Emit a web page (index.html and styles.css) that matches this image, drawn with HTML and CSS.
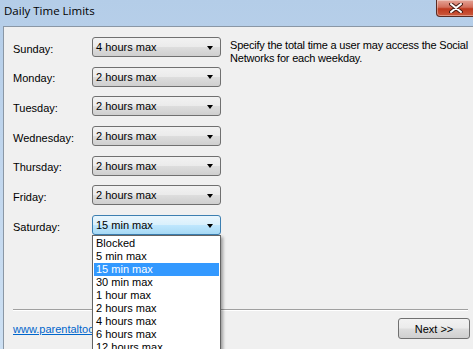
FILE: index.html
```html
<!DOCTYPE html>
<html>
<head>
<meta charset="utf-8">
<link rel="stylesheet" href="styles.css">
</head>
<body>
<div class="window">
  <div class="titlebar">
    <span class="title">Daily Time Limits</span>
    <span class="close"><svg width="14" height="10" viewBox="0 0 14 10"><path d="M2 1 L12 9 M12 1 L2 9" stroke="#4a1c14" stroke-width="4" stroke-linecap="round"/><path d="M2 1 L12 9 M12 1 L2 9" stroke="#ffffff" stroke-width="2" stroke-linecap="round"/></svg></span>
  </div>
  <div class="client">
    <div class="form">
      <div class="rows">
        <div class="row"><span class="label">Sunday:</span><div class="select"><span>4 hours max</span><i class="arrow"></i></div></div>
        <div class="row"><span class="label">Monday:</span><div class="select"><span>2 hours max</span><i class="arrow"></i></div></div>
        <div class="row"><span class="label">Tuesday:</span><div class="select"><span>2 hours max</span><i class="arrow"></i></div></div>
        <div class="row"><span class="label">Wednesday:</span><div class="select"><span>2 hours max</span><i class="arrow"></i></div></div>
        <div class="row"><span class="label">Thursday:</span><div class="select"><span>2 hours max</span><i class="arrow"></i></div></div>
        <div class="row"><span class="label">Friday:</span><div class="select"><span>2 hours max</span><i class="arrow"></i></div></div>
        <div class="row"><span class="label">Saturday:</span>
          <div class="select-wrap">
            <div class="select active"><span>15 min max</span><i class="arrow"></i></div>
            <ul class="list">
              <li>Blocked</li>
              <li>5 min max</li>
              <li class="sel">15 min max</li>
              <li>30 min max</li>
              <li>1 hour max</li>
              <li>2 hours max</li>
              <li>4 hours max</li>
              <li>6 hours max</li>
              <li>12 hours max</li>
            </ul>
          </div>
        </div>
      </div>
      <p class="desc">Specify the total time a user may access the Social<br>Networks for each weekday.</p>
    </div>
    <div class="bottom">
      <div class="sep"></div>
      <div class="footer">
        <a class="link" href="#">www.parentaltools.com</a>
        <button class="btn">Next &gt;&gt;</button>
      </div>
    </div>
  </div>
</div>
</body>
</html>
```

FILE: styles.css
```css
html, body {
  margin: 0;
  padding: 0;
}
body {
  width: 473px;
  height: 349px;
  overflow: hidden;
  font-family: "Liberation Sans", Arial, sans-serif;
  font-size: 11px;
  color: #000;
}
.window {
  width: 473px;
  height: 349px;
  background: linear-gradient(to bottom, #b4cde8 0%, #c2d7ee 50%, #cde0f3 100%);
  display: flex;
  flex-direction: column;
}
.titlebar {
  height: 26px;
  display: flex;
  justify-content: space-between;
  align-items: flex-start;
  flex: none;
}
.title {
  font-family: "Open Sans", "Noto Sans", sans-serif;
  font-size: 11.5px;
  padding: 3px 0 0 4px;
  line-height: 16px;
  color: #000;
}
.close {
  width: 43px;
  height: 17px;
  margin-right: -6px;
  border: 1px solid #5a2b22;
  border-top: none;
  border-radius: 0 0 4px 4px;
  background: linear-gradient(to bottom, #e5a497 0%, #d36f5c 45%, #bf3a1f 55%, #cc5a3e 100%);
  display: flex;
  align-items: center;
  justify-content: center;
  box-sizing: border-box;
  box-shadow: inset 0 0 0 1px rgba(255,255,255,0.35);
}
.close svg { display: block; margin-left: -4px; }
.client {
  flex: 1;
  margin-left: 3px;
  border-left: 1px solid #8a97a5;
  border-top: 1px solid #8a97a5;
  background: #f0f0f0;
  display: flex;
  flex-direction: column;
  position: relative;
}
.form {
  display: flex;
  padding: 10px 0 0 9px;
}
.rows {
  display: flex;
  flex-direction: column;
  gap: 9.7px;
  width: 217px;
  flex: none;
}
.row {
  display: flex;
  align-items: center;
  height: 20px;
}
.label {
  width: 79px;
  flex: none;
  padding-top: 3px;
}
.select-wrap {
  position: relative;
}
.select {
  width: 129px;
  height: 20px;
  box-sizing: border-box;
  border: 1px solid #707070;
  border-radius: 3px;
  background: linear-gradient(to bottom, #f2f2f2 0%, #ebebeb 48%, #dddddd 52%, #cfcfcf 100%);
  display: flex;
  align-items: center;
  justify-content: space-between;
  padding: 0 7px 0 3px;
  line-height: 14px;
}
.select.active {
  border-color: #3c7fb1;
  background: linear-gradient(to bottom, #eaf6fd 0%, #d9f0fc 48%, #bee6fd 52%, #a7d9f5 100%);
}
.arrow {
  width: 0;
  height: 0;
  border-left: 3.5px solid transparent;
  border-right: 3.5px solid transparent;
  border-top: 4px solid #000;
  margin-top: 1px;
}
.list {
  position: absolute;
  top: 20px;
  left: 0;
  width: 129px;
  box-sizing: border-box;
  margin: 0;
  padding: 1px 1px 0 1px;
  list-style: none;
  background: #fff;
  border: 1px solid #646464;
  box-shadow: 2px 2px 3px rgba(0,0,0,0.35);
  z-index: 5;
}
.list li {
  height: 13px;
  line-height: 13px;
  padding-left: 2px;
  white-space: nowrap;
}
.list li.sel {
  background: #3399ff;
  color: #fff;
}
.desc {
  margin: 2px 0 0 0;
  width: 243px;
  flex: none;
  white-space: nowrap;
  line-height: 13px;
  letter-spacing: -0.2px;
}
.bottom {
  margin-top: auto;
}
.sep {
  height: 0;
  margin: 0 5px 0 9px;
  border-top: 1px solid #a0a0a0;
  border-bottom: 1px solid #ffffff;
}
.footer {
  display: flex;
  justify-content: space-between;
  align-items: center;
  padding: 7px 3px 10px 9px;
}
.link {
  color: #0066cc;
  text-decoration: underline;
  padding-top: 1px;
}
.btn {
  width: 72px;
  height: 21px;
  font-family: "Liberation Sans", Arial, sans-serif;
  font-size: 11px;
  color: #000;
  border: 1px solid #707070;
  border-radius: 3px;
  background: linear-gradient(to bottom, #f2f2f2 0%, #ebebeb 48%, #dddddd 52%, #cfcfcf 100%);
  padding: 0;
}
```
